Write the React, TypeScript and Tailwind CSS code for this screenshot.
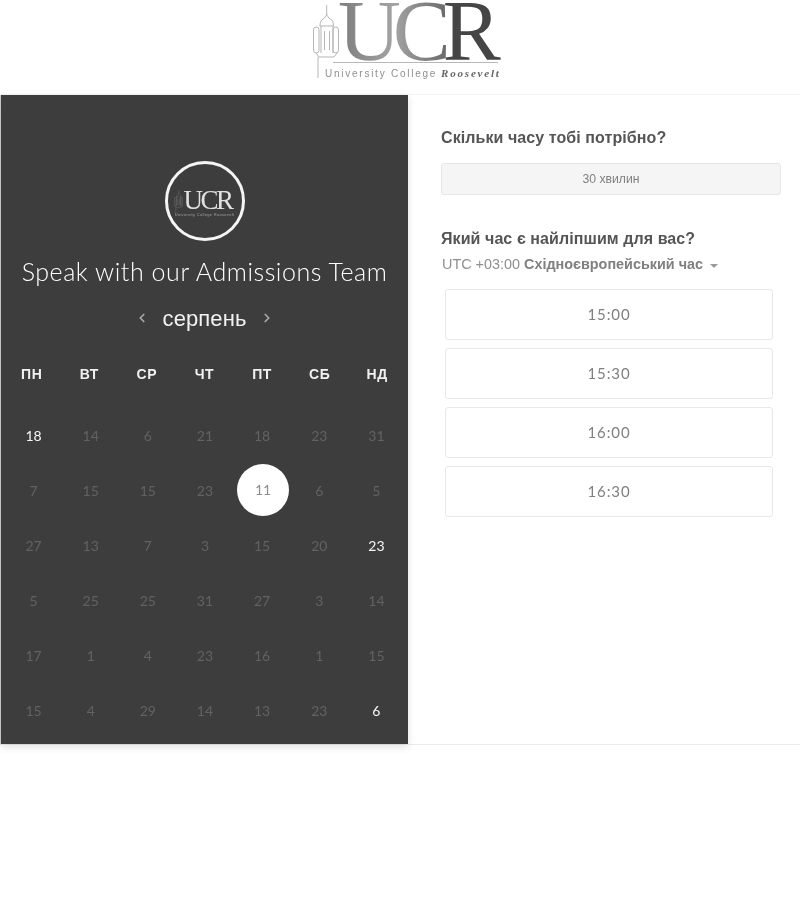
import { ChevronLeft, ChevronRight } from "lucide-react";

const weekDays = ["ПН", "ВТ", "СР", "ЧТ", "ПТ", "СБ", "НД"];

const weeks = [
    [18, 14, 6, 21, 18, 23, 31],
    [7, 15, 15, 23, 11, 6, 5],
    [27, 13, 7, 3, 15, 20, 23],
    [5, 25, 25, 31, 27, 3, 14],
    [17, 1, 4, 23, 16, 1, 15],
    [15, 4, 29, 14, 13, 23, 6]
];

const activeCells = ["0-0", "2-6", "5-6"];
const timeSlots = ["15:00", "15:30", "16:00", "16:30"];

function Tower({ className }: { className?: string }) {
    return (
        <svg viewBox="0 0 26 75" fill="none" stroke="currentColor" strokeWidth="1" className={className}>
            <path d="M13.7 0v9" />
            <path d="M7 21c0-4 1-6 3-7 2-1 3-3 3.7-5 .7 2 1.700 4 3.700 5 2 1 3 3 3 7" />
            <path d="M7 21h14M8 21v27M20 21v27M11.500 26v19M16.500 26v19" />
            <rect x="0.500" y="22" width="5.500" height="26" rx="2.700" />
            <rect x="20" y="22" width="5.500" height="26" rx="2.700" />
            <path d="M3 48l3 4h15l3-4M5 52v21" />
        </svg>
    );
}

function HeaderLogo() {
    return (
        <div className="flex h-[95px] justify-center border-b border-[#f4f4f4] pl-[16px]">
            <div className="flex w-[190px]">
                <Tower className="mt-[5px] h-[75px] w-[26px] shrink-0 text-[#b5b5b5]" />
                <div className="-ml-[1px] flex w-[165px] flex-col pt-[1px]">
                    <div className="flex h-[61px] font-['Liberation_Serif',serif] text-[87px] leading-[60px] tracking-[-8px]">
                        <span className="-mr-[8px] bg-gradient-to-r from-[#7d7d7d] via-[#a3a3a3] to-[#666666] bg-clip-text pr-[8px] text-transparent">
                            UC
                        </span>
                        <span className="text-[#454545]">R</span>
                    </div>
                    <div className="-ml-[5px] h-px w-[165px] bg-[#b8b8b8]" />
                    <div className="mt-[2px] -ml-[13px] flex items-baseline gap-[4px] whitespace-nowrap">
                        <span className="font-['Liberation_Sans',sans-serif] text-[10px] tracking-[1.750px] text-[#8f8f8f]">
                            University College
                        </span>
                        <span className="font-['Liberation_Serif',serif] text-[11px] font-bold italic tracking-[1.800px] text-[#666666]">
                            Roosevelt
                        </span>
                    </div>
                </div>
            </div>
        </div>
    );
}

function CircleLogo() {
    return (
        <div className="mx-auto flex h-[80px] w-[80px] flex-col items-center justify-center rounded-full border-[3px] border-[#f5f5f5]">
            <div className="flex items-end pr-[3px]">
                <Tower className="-mb-[4px] h-[25px] w-[9px] text-[#8a8a8a]" />
                <div className="font-['Liberation_Serif',serif] text-[27px] leading-[22px] tracking-[-2.500px] text-[#e2e2e2]">
                    UCR
                </div>
            </div>
            <div className="mt-[1px] -mb-[4px] whitespace-nowrap font-['Liberation_Sans',sans-serif] text-[4px] leading-[6px] tracking-[0.300px] text-[#a0a0a0]">
                University College Roosevelt
            </div>
        </div>
    );
}

function Calendar() {
    return (
        <div className="h-[649px] w-[407px] shrink-0 bg-[#3d3d3d] pt-[66px] shadow-[0_3px_8px_rgba(0,0,0,0.12)]">
            <CircleLogo />
            <h1 className="mt-[11px] flex h-[40px] items-center justify-center font-['Lato',sans-serif] text-[25px] font-light tracking-[0.550px] whitespace-nowrap text-white">
                Speak with our Admissions Team
            </h1>
            <div className="mt-[10px] flex h-[32px] items-center justify-center gap-[14px] text-[#a8a8a8]">
                <ChevronLeft size={14} strokeWidth={3} />
                <span className="font-['Liberation_Sans',sans-serif] text-[22px] tracking-[0.100px] text-[#f2f2f2]">серпень</span>
                <ChevronRight size={14} strokeWidth={3} />
            </div>
            <div className="mt-[30px] grid h-[20px] grid-cols-7 px-[2px] font-['Liberation_Sans',sans-serif] text-[14px] font-bold tracking-[0.600px] text-[#f0f0f0]">
                {weekDays.map((day) => (
                    <div key={day} className="flex items-center justify-center">
                        {day}
                    </div>
                ))}
            </div>
            <div className="mt-[24px] grid grid-cols-7 pr-[3px] pl-[4px] font-['Lato',sans-serif] text-[14px]">
                {weeks.map((week, row) =>
                    week.map((day, col) => {
                        const selected = row === 1 && col === 4;
                        return (
                            <div key={`${row}-${col}`} className="flex h-[55px] items-center justify-center">
                                <span
                                    className={
                                        selected
                                            ? "flex h-[52px] w-[52px] translate-x-px -translate-y-px items-center justify-center rounded-full bg-white text-[#8c8c8c]"
                                            : activeCells.includes(`${row}-${col}`)
                                              ? "text-[#f5f5f5]"
                                              : "text-[#626262]"
                                    }
                                >
                                    {day}
                                </span>
                            </div>
                        );
                    })
                )}
            </div>
        </div>
    );
}

function Scheduler() {
    return (
        <div className="flex-1 pt-[33px] pr-[19px] pl-[33px] font-['Liberation_Sans',sans-serif]">
            <h2 className="flex h-[20px] items-center text-[16px] font-bold tracking-[0.080px] text-[#555555]">
                Скільки часу тобі потрібно?
            </h2>
            <div className="mt-[15px] flex h-[32px] items-center justify-center rounded-[3px] border border-[#e6e6e6] bg-[#f5f5f5] text-[12.200px] text-[#808080]">
                30 хвилин
            </div>
            <h2 className="mt-[34px] flex h-[20px] items-center text-[16px] font-bold tracking-[0.080px] text-[#555555]">
                Який час є найліпшим для вас?
            </h2>
            <div className="mt-[6px] flex h-[20px] items-center pl-px text-[14.400px] text-[#8f8f8f]">
                UTC +03:00&nbsp;<span className="font-bold text-[#808080]">Східноєвропейський час</span>
                <span className="mt-[2px] ml-[7px] h-0 w-0 border-x-[4px] border-t-[4px] border-x-transparent border-t-[#999999]" />
            </div>
            <div className="mt-[14px] ml-[4px] flex w-[328px] flex-col gap-[8px]">
                {timeSlots.map((slot) => (
                    <div
                        key={slot}
                        className="flex h-[51px] items-center justify-center rounded-[3px] border border-[#e8e8e8] font-['Lato',sans-serif] text-[15px] tracking-[0.900px] text-[#808080]"
                    >
                        {slot}
                    </div>
                ))}
            </div>
        </div>
    );
}

export default function App() {
    return (
        <div className="h-[900px] w-[800px] overflow-hidden bg-white blur-[0.4px] grayscale">
            <HeaderLogo />
            <div className="flex h-[650px] border-b border-l border-b-[#ececec] border-l-[#d0d0d0]">
                <Calendar />
                <Scheduler />
            </div>
        </div>
    );
}
